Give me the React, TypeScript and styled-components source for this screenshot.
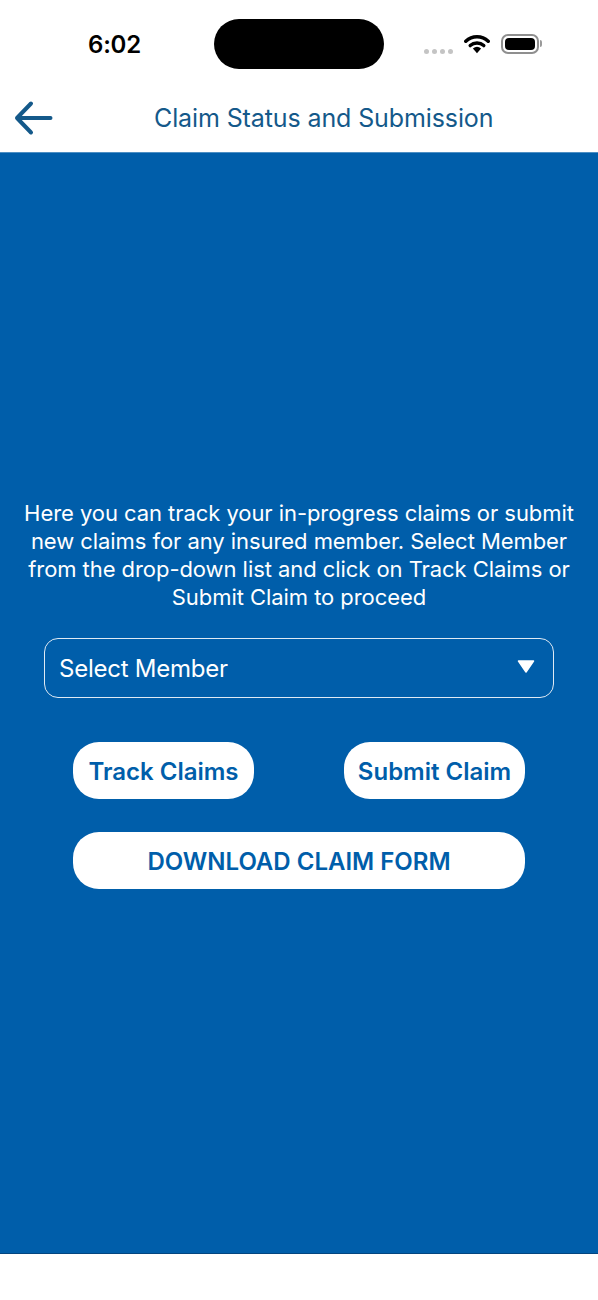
import styled, { createGlobalStyle } from "styled-components";

const GlobalStyle = createGlobalStyle`
  html, body {
    margin: 0;
    padding: 0;
    background: #fff;
  }
  * {
    box-sizing: border-box;
  }
`;

const App = () => {
  return (
    <Screen>
      <GlobalStyle />
      <StatusBar>
        <Time>6:02</Time>
        <Island />
        <StatusIcons>
          <Dots>
            <Dot />
            <Dot />
            <Dot />
            <Dot />
          </Dots>
          <svg width="26" height="20" viewBox="0 0 26 20">
            <path d="M1.8 7.2 A16.5 16.5 0 0 1 24.2 7.2" fill="none" stroke="#000" strokeWidth="3.6" strokeLinecap="round" />
            <path d="M6.2 11.6 A10 10 0 0 1 19.8 11.6" fill="none" stroke="#000" strokeWidth="3.4" strokeLinecap="round" />
            <path d="M8.9 14.6 Q13 11 17.1 14.6 L13 19.2 Z" fill="#000" />
          </svg>
          <Battery>
            <BatteryFill />
          </Battery>
          <BatteryCap />
        </StatusIcons>
      </StatusBar>
      <Header>
        <BackIcon width="40" height="36" viewBox="0 0 40 36">
          <path
            d="M36.5 18 H3 M17 3.5 L3 18 L17 32.5"
            fill="none"
            stroke="#14598a"
            strokeWidth="4"
            strokeLinecap="round"
            strokeLinejoin="round"
          />
        </BackIcon>
        <Title>Claim Status and Submission</Title>
      </Header>
      <Main>
        <Intro>
          Here you can track your in-progress claims or submit
          <br />
          new claims for any insured member. Select Member
          <br />
          from the drop-down list and click on Track Claims or
          <br />
          Submit Claim to proceed
        </Intro>
        <Select>
          <span>Select Member</span>
          <SelectArrow width="18" height="13" viewBox="0 0 18 13">
            <path d="M1.5 1 H16.5 L9 12 Z" fill="#fff" stroke="#fff" strokeWidth="1.5" strokeLinejoin="round" />
          </SelectArrow>
        </Select>
        <ButtonRow>
          <PillButton>Track Claims</PillButton>
          <PillButton>Submit Claim</PillButton>
        </ButtonRow>
        <PillButton $wide>DOWNLOAD CLAIM FORM</PillButton>
      </Main>
      <Footer />
    </Screen>
  );
};

export default App;

const Screen = styled.div`
  width: 598px;
  height: 1300px;
  display: flex;
  flex-direction: column;
  background: #fff;
  font-family: Inter, "Liberation Sans", sans-serif;
  overflow: hidden;
`;

const StatusBar = styled.div`
  height: 88px;
  flex-shrink: 0;
  display: flex;
  align-items: flex-start;
  padding: 19px 0 0 88px;
`;

const Time = styled.div`
  width: 126px;
  margin-top: 11px;
  font-size: 24px;
  line-height: 29px;
  font-weight: 600;
  letter-spacing: -0.2px;
  color: #000;
`;

const Island = styled.div`
  width: 170px;
  height: 50px;
  border-radius: 25px;
  background: #000;
`;

const StatusIcons = styled.div`
  display: flex;
  align-items: center;
  margin: 14px 0 0 40px;
`;

const Dots = styled.div`
  display: flex;
  gap: 3px;
  margin: 16px 11px 0 0;
`;

const Dot = styled.span`
  width: 5px;
  height: 5px;
  border-radius: 50%;
  background: #c4c4c4;
`;

const Battery = styled.div`
  width: 38px;
  height: 20px;
  margin-left: 11px;
  padding: 2px;
  border: 2px solid #8f8f8f;
  border-radius: 7px;
`;

const BatteryFill = styled.div`
  height: 100%;
  border-radius: 4px;
  background: #000;
`;

const BatteryCap = styled.div`
  width: 2px;
  height: 7px;
  margin-left: 1px;
  border-radius: 0 2px 2px 0;
  background: #9a9a9a;
`;

const Header = styled.div`
  height: 64px;
  flex-shrink: 0;
  display: flex;
  align-items: center;
  padding: 0 0 4px 14px;
`;

const BackIcon = styled.svg`
  flex-shrink: 0;
`;

const Title = styled.div`
  margin-left: 100px;
  font-size: 25px;
  line-height: 30px;
  letter-spacing: -0.11px;
  color: #14598a;
  white-space: nowrap;
`;

const Main = styled.div`
  flex: 1;
  display: flex;
  flex-direction: column;
  align-items: center;
  padding-top: 346px;
  background: #005eaa;
  border-top: 1px solid #4d8fc4;
  border-bottom: 1px solid #03457f;
`;

const Intro = styled.div`
  width: 598px;
  font-size: 22px;
  line-height: 28px;
  letter-spacing: -0.06px;
  text-align: center;
  color: #fff;
  white-space: nowrap;
`;

const Select = styled.div`
  width: 510px;
  height: 60px;
  margin-top: 27px;
  padding: 0 18px 0 14px;
  display: flex;
  align-items: center;
  justify-content: space-between;
  border: 1.5px solid #dfeaf4;
  border-radius: 14px;
  font-size: 24px;
  letter-spacing: -0.25px;
  color: #fff;
`;

const SelectArrow = styled.svg`
  margin-bottom: 4px;
`;

const ButtonRow = styled.div`
  width: 452px;
  margin: 44px 0 33px;
  display: flex;
  justify-content: space-between;
`;

const PillButton = styled.div<{ $wide?: boolean }>`
  width: ${(p) => (p.$wide ? "452px" : "181px")};
  height: 57px;
  padding-top: 2px;
  display: flex;
  align-items: center;
  justify-content: center;
  border-radius: 26px;
  background: #fff;
  color: #005eaa;
  font-size: 24px;
  font-weight: 600;
  white-space: nowrap;
`;

const Footer = styled.div`
  height: 46px;
  flex-shrink: 0;
  background: #fff;
`;
